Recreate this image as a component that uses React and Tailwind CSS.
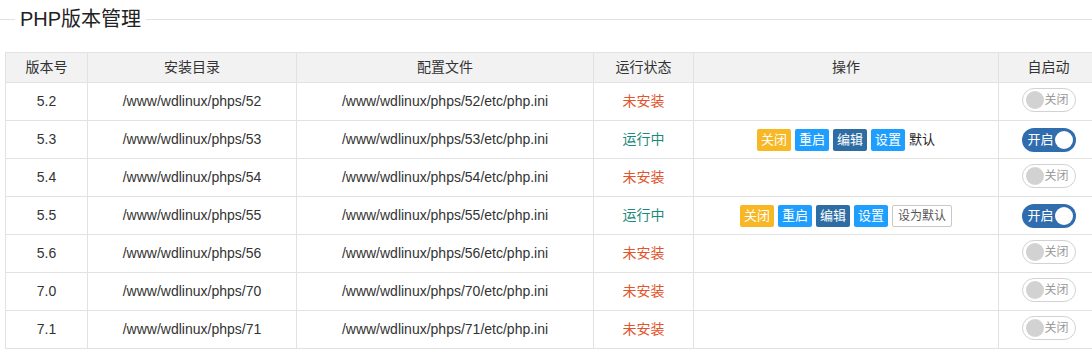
import React from 'react';

const rows = [
  { v: '5.2', dir: '52', running: false },
  { v: '5.3', dir: '53', running: true, isDefault: true },
  { v: '5.4', dir: '54', running: false },
  { v: '5.5', dir: '55', running: true },
  { v: '5.6', dir: '56', running: false },
  { v: '7.0', dir: '70', running: false },
  { v: '7.1', dir: '71', running: false },
];

function Btn({ color, children }) {
  return (
    <span className={`inline-flex h-[22px] items-center rounded-[2px] px-[4px] text-[13px] text-white ${color}`}>
      {children}
    </span>
  );
}

function Toggle({ on }) {
  if (on) {
    return (
      <div className="inline-flex h-[24px] w-[54px] items-center justify-between rounded-full bg-[#2f6daf] pl-[6px] pr-[3px]">
        <span className="text-[13px] text-white">开启</span>
        <span className="h-[18px] w-[18px] rounded-full bg-white" />
      </div>
    );
  }
  return (
    <div className="inline-flex h-[24px] w-[54px] items-center justify-between rounded-full border border-[#d2d2d2] bg-white pl-[3px] pr-[6px]">
      <span className="h-[18px] w-[18px] rounded-full bg-[#d2d2d2]" />
      <span className="text-[12px] text-[#999]">关闭</span>
    </div>
  );
}

export default function App() {
  return (
    <div
      className="h-[356px] w-[1092px] overflow-hidden bg-white text-[14px] text-[#333]"
      style={{ fontFamily: '"Liberation Sans", Arial, "Noto Sans CJK SC", sans-serif' }}
    >
      {/* 标题 */}
      <div className="flex items-center pt-[6px]">
        <div className="h-px w-[15px] bg-[#e2e2e2]" />
        <h2 className="px-[5px] text-[20px] leading-[26px] text-[#222]">PHP版本管理</h2>
        <div className="h-px flex-1 bg-[#e2e2e2]" />
      </div>

      <div className="ml-[5px] mt-[20px] w-[1094px]">
        <table className="w-full border-collapse text-center">
          <colgroup>
            <col className="w-[82px]" />
            <col className="w-[209px]" />
            <col className="w-[297px]" />
            <col className="w-[100px]" />
            <col className="w-[305px]" />
            <col />
          </colgroup>
          <thead>
            <tr className="h-[30px] bg-[#f2f2f2] text-[#333]">
              {['版本号', '安装目录', '配置文件', '运行状态', '操作', '自启动'].map((h) => (
                <th key={h} className="border border-[#e2e2e2] font-normal">{h}</th>
              ))}
            </tr>
          </thead>
          <tbody>
            {rows.map((r) => (
              <tr key={r.v} className="h-[38px]">
                <td className="border border-[#e2e2e2]">{r.v}</td>
                <td className="border border-[#e2e2e2]">/www/wdlinux/phps/{r.dir}</td>
                <td className="border border-[#e2e2e2]">/www/wdlinux/phps/{r.dir}/etc/php.ini</td>
                <td className={`border border-[#e2e2e2] ${r.running ? 'text-[#1b8a7b]' : 'text-[#e2552b]'}`}>
                  {r.running ? '运行中' : '未安装'}
                </td>
                <td className="border border-[#e2e2e2]">
                  {r.running && (
                    <div className="flex items-center justify-center gap-[4px]">
                      <Btn color="bg-[#f8b825]">关闭</Btn>
                      <Btn color="bg-[#1e9fff]">重启</Btn>
                      <Btn color="bg-[#2e6da4]">编辑</Btn>
                      <Btn color="bg-[#1e9fff]">设置</Btn>
                      {r.isDefault ? (
                        <span className="text-[13px] text-[#222]">默认</span>
                      ) : (
                        <span className="inline-flex h-[22px] items-center rounded-[2px] border border-[#c9c9c9] px-[5px] text-[12px] text-[#555]">
                          设为默认
                        </span>
                      )}
                    </div>
                  )}
                </td>
                <td className="border border-[#e2e2e2]">
                  <Toggle on={r.running} />
                </td>
              </tr>
            ))}
          </tbody>
        </table>
      </div>
    </div>
  );
}
